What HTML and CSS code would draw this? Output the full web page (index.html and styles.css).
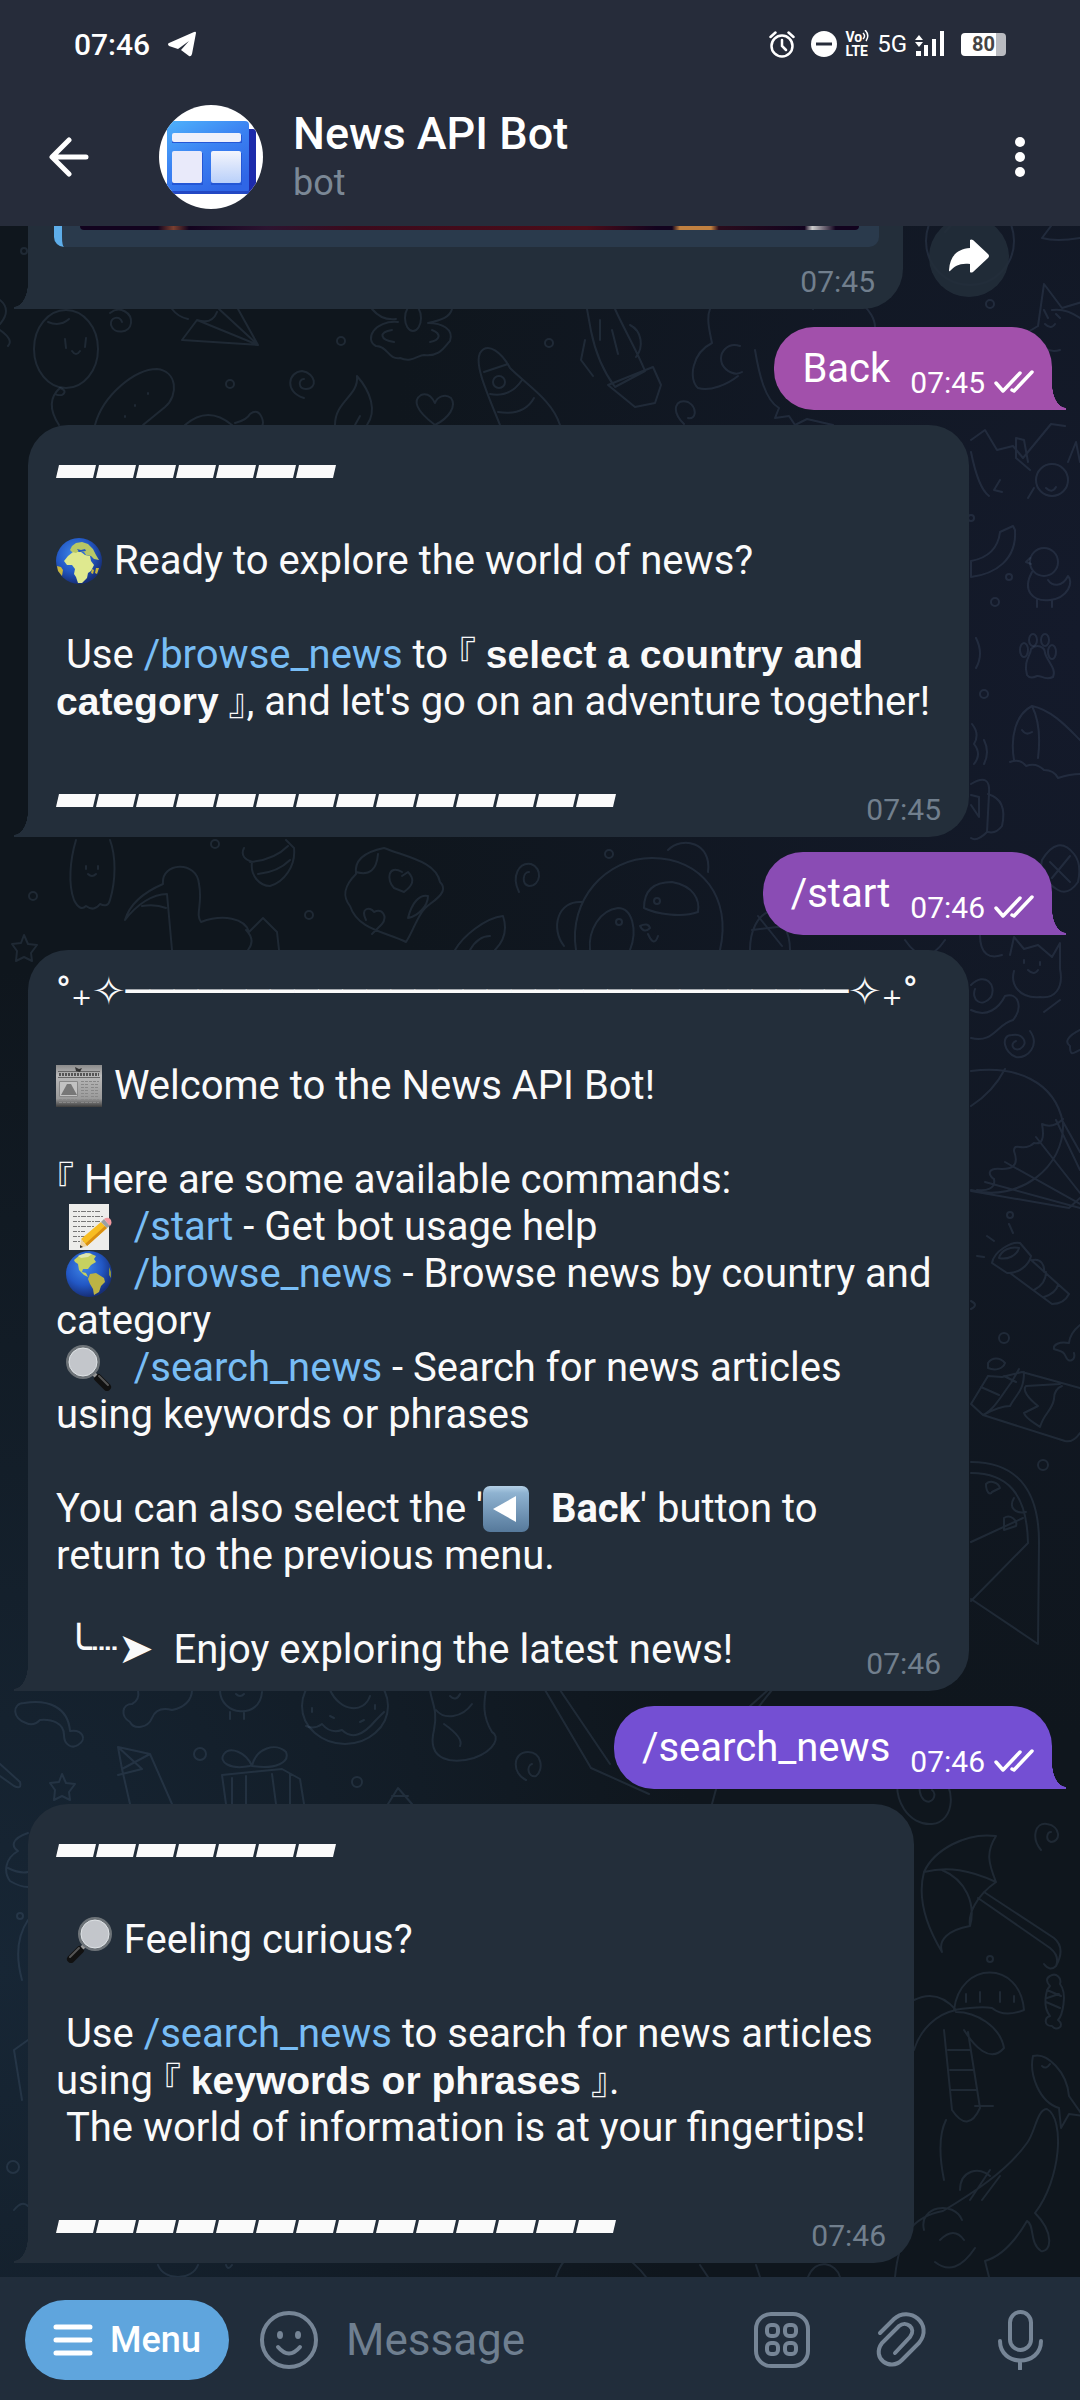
FILE: index.html
```html
<!DOCTYPE html>
<html lang="en">
<head>
<meta charset="utf-8">
<meta name="viewport" content="width=device-width, initial-scale=1">
<title>News API Bot</title>
<link rel="stylesheet" href="styles.css">
</head>
<body>
<svg class="sprite" aria-hidden="true">
  <defs>
    <radialGradient id="sea" cx="40%" cy="35%" r="65%"><stop offset="0" stop-color="#3f86e8"/><stop offset=".6" stop-color="#2257c4"/><stop offset="1" stop-color="#172f78"/></radialGradient>
    <linearGradient id="paper" x2="0" y2="1"><stop offset="0" stop-color="#8b8b8b"/><stop offset=".25" stop-color="#b9b9b9"/><stop offset=".8" stop-color="#9a9a9a"/><stop offset="1" stop-color="#3c3c3c"/></linearGradient>
    <linearGradient id="key" x2="0" y2="1"><stop offset="0" stop-color="#b4d0e6"/><stop offset=".15" stop-color="#8fb3d1"/><stop offset="1" stop-color="#56799b"/></linearGradient>
    <linearGradient id="card" x2=".6" y2="1"><stop offset="0" stop-color="#4fb2fb"/><stop offset=".5" stop-color="#3b82f2"/><stop offset="1" stop-color="#2f66e6"/></linearGradient>
    <linearGradient id="pane" x2="0" y2="1"><stop offset="0" stop-color="#f4f5fc"/><stop offset="1" stop-color="#b9d0fa"/></linearGradient>
    <pattern id="slab" width="40" height="13" patternUnits="userSpaceOnUse"><path fill="#fafafa" d="M3 0h37l-3 13H0z"/></pattern>
  </defs>
  <symbol id="globe-africa" viewBox="0 0 46 46">
    <circle cx="23" cy="23" r="23" fill="url(#sea)"/>
    <path fill="#dfe98f" d="M12 18l5-4 8 0 4 3 5 1 1 5 3 4-3 6-3 2-1 5-5 5-4 0-2-6-2-3 1-5-3-4-5 0-3-4z"/>
    <path fill="#b8c765" d="M14 12l2-4 4-3 6-1 6 2 5 5 3 6 3 5-5-1-3-3-5-1-2-3-5-1-3 2-4-1z"/>
    <path fill="#c9b53c" d="M1 28l4 1 2 3-1 6-4-5zM40 30l3 0-2 6-2-1zM36 31l2 1-1 4-2-1z"/>
    <path fill="#2457bf" d="M21 11l4 1 4-1 1 2-7 1z"/>
  </symbol>
  <symbol id="globe-americas" viewBox="0 0 46 46">
    <circle cx="23" cy="23" r="23" fill="url(#sea)"/>
    <path fill="#c7d160" d="M8 9l6-5 9-2 7 3-2 3 2 3-5 3-3 4-5 0-1 3 4 1 2 4-4-2-5-5-1-6-3-2z"/>
    <path fill="#bcb344" d="M24 23l6-1 8 5 1 4-4 4-2 6-5 3-1-6-3-5-2-5z"/>
    <path fill="#8c9440" d="M43 16l2 5 0 6-2-3z"/>
    <path fill="#dfe6b0" d="M12 5l8-3 6 1-4 3-7 1z"/>
  </symbol>
  <symbol id="newspaper" viewBox="0 0 46 46">
    <path fill="url(#paper)" d="M0 2h46v42H0z"/>
    <path stroke="#666" d="M2 8.500h42M2 14.500h42"/><path stroke="#555" stroke-width="3" stroke-dasharray="2 1" d="M3 11.500h40"/>
    <path fill="#333" d="M19 4l4 2 3-1-2 4-4-1z"/>
    <path fill="#c2c2c2" stroke="#888" d="M3.500 18.500h18v15h-18z"/><path fill="#777" d="M5 32l6-11 4 0 6 11z"/>
    <path stroke="#888" stroke-dasharray="3 1" d="M25 18.500h18M25 21.500h8M35 21.500h8M25 24.500h8M35 24.500h8M25 27.500h8M35 27.500h8M25 30.500h8M35 30.500h8M25 33.500h8M35 33.500h8M3 36.500h18M25 36.500h18M3 39.500h18M25 39.500h18"/>
  </symbol>
  <symbol id="memo" viewBox="0 0 46 46">
    <path fill="#ededeb" d="M3 0h40v46H3z"/>
    <path fill="none" stroke="#777" stroke-dasharray="4 1 2 1 5 1" d="M7 7.500h27M7 12.500h30M7 17.500h28M7 22.500h22M7 27.500h12M7 32.500h15M7 37.500h12"/>
    <path fill="#f7bd23" d="M35 18l6 6-20 18-6-7z"/><path fill="#d98f12" d="M39 22l2 2-20 18-2-2z"/>
    <path fill="#edd3a3" d="M15 35l6 7-7 2z"/><path fill="#333" d="M14 41l3 2-3 1z"/>
    <path fill="#9ba0a4" d="M35 18l3-3 6 7-3 2z"/><path fill="#f19aa0" d="M38 15c5-4 10 2 6 7z"/>
  </symbol>
  <symbol id="magnifier" viewBox="0 0 46 46">
    <path stroke="#111" stroke-width="8" stroke-linecap="round" d="M32 33l9 9"/>
    <path stroke="#555" stroke-width="2" stroke-linecap="round" d="M33 31l9 9"/>
    <path stroke="#999" stroke-width="4" d="M26 27l4 4"/>
    <circle cx="17" cy="17" r="15.500" fill="#c3c6cb" stroke="#6d7378" stroke-width="3"/>
    <circle cx="17" cy="17" r="14" fill="none" stroke="#dfe3e6"/>
  </symbol>
  <symbol id="reverse-key" viewBox="0 0 46 46">
    <rect width="46" height="46" rx="7" fill="url(#key)"/><path fill="#fff" d="M10 23l23-13v26z"/>
  </symbol>
  <symbol id="ticks" viewBox="0 0 42 24">
    <path fill="none" stroke="#fff" stroke-width="3.500" stroke-linecap="round" stroke-linejoin="round" d="M2 13l7 8L26 3M18 20l2 1L38 2"/>
  </symbol>
</svg>

<header class="top">
  <div class="status">
    <span class="clock">07:46</span>
    <svg class="plane" width="28" height="26" viewBox="0 0 28 26" aria-hidden="true"><path fill="#fff" d="M1 12L26 1q2-1 2 1l-4 21q-1 3-3 2l-8-6 8-9-11 8-9-3q-2-2 0-3z"/></svg>
    <div class="indicators">
      <svg width="26" height="27" viewBox="0 0 26 27" fill="none" stroke="#fff" stroke-width="2.500" stroke-linecap="round" aria-label="Alarm" role="img"><circle cx="13" cy="15" r="10.500"/><path d="M13 9v6l4 4M1.500 6l5-4.500M24.500 6l-5-4.500"/></svg>
      <svg class="dnd" width="26" height="26" viewBox="0 0 26 26" aria-label="Do not disturb" role="img"><circle cx="13" cy="13" r="13" fill="#fff"/><path stroke="#262c3a" stroke-width="3" d="M5 13h16"/></svg>
      <span class="volte"><span>Vo<svg width="7" height="12" viewBox="0 0 7 12" fill="none" stroke="#fff" stroke-width="1.500" aria-hidden="true"><path d="M1 3q3 3 0 6M3 0q5 5 1 11"/></svg></span><span>LTE</span></span>
      <span class="network">5G</span>
      <svg width="30" height="26" viewBox="0 0 30 26" fill="#fff" aria-label="Signal" role="img"><path d="M1 20h5v5H1zM9 14h4v11H9zM17 8h4v17h-4zM25 0h4v25h-4zM0 9l4-5 4 5zM0 11h8l-4 5z"/></svg>
      <span class="battery">80</span>
    </div>
  </div>
  <div class="titlebar">
    <button class="icon-button" aria-label="Go back"><svg width="40" height="40" viewBox="0 0 40 40" fill="none" stroke="#fff" stroke-width="5" stroke-linecap="round" stroke-linejoin="round"><path d="M20 3L3 20l17 17M4 20h33"/></svg></button>
    <svg class="avatar" width="104" height="104" viewBox="0 0 104 104" role="img" aria-label="News API Bot">
      <clipPath id="disc"><circle cx="52" cy="52" r="52"/></clipPath>
      <g clip-path="url(#disc)">
        <path fill="#fff" d="M0 0h104v104H0z"/>
        <rect x="40" y="24" width="57" height="64" rx="3" fill="#1d2bab"/>
        <rect x="8" y="16" width="82" height="72" rx="4" fill="url(#card)"/>
        <path fill="#2348c4" d="M8 86h82v3H8z"/>
        <path fill="#2457d6" d="M13 30h70v8H13zM13 48h31v32H13zM52 48h31v32H52z"/>
        <rect x="13" y="28" width="69" height="9" rx="2" fill="#eef0fb"/>
        <rect x="13" y="46" width="30" height="32" rx="2" fill="#e9eafa"/>
        <rect x="52" y="46" width="30" height="32" rx="2" fill="url(#pane)"/>
      </g>
    </svg>
    <div class="peer"><h1>News API Bot</h1><p>bot</p></div>
    <button class="icon-button" aria-label="More options"><svg width="12" height="42" viewBox="0 0 12 42" fill="#fff"><circle cx="6" cy="6" r="5"/><circle cx="6" cy="21" r="5"/><circle cx="6" cy="36" r="5"/></svg></button>
  </div>
</header>

<main class="chat">
  <svg class="doodles" width="1080" height="2051" viewBox="0 226 1080 2051" aria-hidden="true">
    <!-- strip under the first message -->
    <ellipse cx="66" cy="349" rx="32" ry="39"/><path d="M65 339l1 9M86 338l-1 9M72 351q4 6 8 0M48 322q12 5 21-3M60 388q-10 8 2 7q6-4-2-7q-16 14-1 37"/>
    <path d="M110 313c10-8 22 0 21 10c-1 10-17 12-20 2c-1-8 9-10 11-3"/>
    <path d="M197 320L182 340L258 345L238 309M197 320L258 345L219 309M197 320q15 5 20-8M172 309q6 8 16 10"/>
    <path d="M95 425c8-30 40-56 62-56c20 2 22 26 8 38l-22 18M148 393v1M135 405v1M125 416v1"/>
    <circle cx="341" cy="341" r="4"/><circle cx="230" cy="384" r="4"/><circle cx="24" cy="251" r="3"/><circle cx="549" cy="343" r="4"/><circle cx="990" cy="304" r="4"/>
    <path d="M304 398c-20-6-16-26-2-27c14 2 16 18 4 18c-8 0-8-10-2-10"/>
    <path d="M357 376c2 20-22 25-22 49M357 376c14 16 20 35 10 49M360 416l-5 9"/>
    <path d="M185 425q23-20 47 0M235 423q12-3 15-9q8-6 12 4q2 5 0 8"/>
    <path d="M398 322c-24-2-34 18-22 24c12 0 12 14 24 12c12 5 18-3 24-3c16 2 20-8 26-14c4-12-8-18-22-18c14-3 22-6 24-14M372 309q10 12 24 10"/><ellipse cx="413" cy="318" rx="8" ry="13"/><path d="M392 330c-14 2-12 10 2 12M432 330c10 4 8 10-2 12"/>
    <path d="M500 425c-12-30-26-60-20-72c8-12 22 0 30 15c18 18 42 32 50 57M484 372l24-8M490 394q20 4 32-14M498 412q26 4 36-14"/><circle cx="499" cy="382" r="6"/>
    <path d="M587 309l4 22c4 20 12 40 24 56l30-16c-8-20-22-44-30-62M608 385l45-18l8 18l-6 18l-20 4zM585 340l-4 20l12 16M600 320v20M612 330l6 24M630 325c12 6 14 22 6 32"/>
    <path d="M435 425c-20-15-22-25-14-30c8-3 12 4 14 8c2-6 10-10 16-5c6 8-2 20-16 27"/>
    <path d="M710 309c-4 10 0 24 2 34c-20 10-24 36-14 45c12 4 30-4 40-12M740 346c-12-4-22 6-18 18c4 8 14 12 20 8M755 350c4 24 10 50 24 58l-4 10l14-2l6 9l12-6l26 6M813 309c6-10 30-20 44-8c14 8 18 20 18 26"/>
    <path d="M1018 338l20-12l6-42l18 24l20-6M1036 340q10 14 24 10M1044 310l4 8M1056 314l4 4M1045 324q6 6 10 0M1052 310q14-2 28 8"/>
    <circle cx="970" cy="241" r="44"/><path d="M945 232q10-10 8-14M1042 238l12-16q10-8 26-2M1042 238q14 4 38 0"/>
    <path d="M684 424c-14-14-8-26 4-22c10 6 8 18 0 16M0 300q12 10 0 24M0 330q14 10 8 16"/>
    <!-- right column, upper -->
    <path d="M971 440l14-10l12 20l16-4l10 12l28-34l14 2M971 452c4 20 10 38 18 44M1000 480l-6 10l8 2M1030 470l-14-12v-20l8 2l4 22"/><circle cx="1052" cy="480" r="16"/><path d="M1034 488l-6 10M1046 488q6 6 10-1M1068 462l8-20l4 20"/>
    <path d="M1000 532l13-6l2 4c2 30-20 44-44 47v-16c16-3 27-12 29-29"/><circle cx="1009" cy="577" r="3"/><circle cx="971" cy="518" r="3"/><circle cx="995" cy="602" r="4"/><circle cx="984" cy="694" r="4"/>
    <circle cx="1044" cy="562" r="14"/><path d="M1032 572c-10 18 0 30 18 28c18-2 24-18 18-24c-6 12-16 10-20 4M1030 558l-4 4l5 2M1037 600v7M1052 600v7"/>
    <path d="M1027 675c-4-14 4-20 4-26c6-6 14-2 14 4c2 8 12 16 8 24c-8 4-12-2-16-1c-4 2-8 2-10-1"/><ellipse cx="1024" cy="650" rx="4" ry="7"/><ellipse cx="1033" cy="640" rx="4" ry="6"/><ellipse cx="1045" cy="640" rx="4" ry="6"/><ellipse cx="1052" cy="652" rx="4" ry="7"/>
    <path d="M1014 760c-4-24 2-46 18-54c20 4 36 22 48 34M1010 762q10-4 16 4q10-4 18 4q10 0 14 8q12-4 22-4M1032 706q10 20 6 52M1022 730q4 6 10 2M976 638q8 16 0 30M972 724q8 10 2 20q8 10 0 20M984 740q6 12 0 24"/>
    <path d="M971 784q20-12 18 10l-2 38q-10 10-16 6M988 794q20 6 14 32q-6 8-14 6M971 795l8 2v20l-8-12"/>
    <!-- strip between the messages -->
    <path d="M74 900c-6-16-4-40 2-60M74 900q6 12 12 6q8 6 14-2q8 4 10-4c6-20 6-44 0-60M86 866v3M98 866v3M88 874q4 4 8 0"/>
    <path d="M244 848c-4 8 2 12 8 14c-2 14 8 24 18 24c14-4 26-20 24-38l-8-8M250 862q24-2 38-16M258 874q20-2 32-14"/>
    <path d="M172 950l-5-56c-14 0-30 10-42 26c6-20 24-30 38-36c-2-22 34-24 36 0c4 20-4 30 2 38c22-8 44-4 48 10l14-14l14 14l2 18M142 906q14-2 24 2M246 930q10 10 2 20"/>
    <path d="M384 848c-20 4-30 12-28 26c-12 12-14 22-6 32c8 24 36 26 56 36c8-12 12-30 24-38c14-10 16-16 10-22c-4-20-30-24-56-34zM402 872c-14-8-16 8-8 16l10 4c8-6 12-12 4-20l-6 4M366 920c-6-12 4-14 8-8c8-4 14 4 8 12l-10 10M408 918c4-16 12-24 20-22c0 10-10 20-20 22M356 872q20 6 22-18"/>
    <path d="M519 892c-8-16 0-30 12-28c12 4 10 22-2 22c-8-2-6-14 0-14"/>
    <path d="M455 950c8-14 30-32 48-34c4 12 2 24-8 34M470 950q8-14 20-14"/>
    <path d="M576 950c-8-50 30-92 76-92c50 0 80 40 68 92M668 850c14-14 44-8 40 22M582 902c-24-2-32 26-18 44M590 950c-2-20 10-40 28-42c14 0 20 22 12 42M644 908c0-20 12-26 28-26c22 4 28 18 26 30c-16 6-42 2-54-4z"/><circle cx="619" cy="922" r="3"/><circle cx="657" cy="901" r="3"/><path d="M640 926q8-4 10 2q-6 6-10-2M648 934q6 14 10 2"/>
    <path d="M750 950c0-20 8-34 18-38c14 6 22 20 22 38M752 930l34-4M758 916l24 30"/><circle cx="609" cy="854" r="4"/><circle cx="309" cy="915" r="4"/><circle cx="33" cy="896" r="4"/><circle cx="215" cy="844" r="4"/>
    <path d="M24 935l4 9l9 1l-6 8l1 8l-8-4l-8 4l1-10l-5-7l9-1z"/>
    <path d="M1042 860q16-26 32-6q8 10 4 28q-10 14-20 8q-20-12-16-30M1050 862l20 20M1052 878l18-22"/>
    <!-- right column, middle -->
    <path d="M905 940q20 30 40 0M980 935c0 20 10 24 22 20M1010 955l4-18l10 12l14-4l14 12l8-14v26c4 20-6 30-20 28c-20 2-30-12-26-26M1024 960v3M1040 962v3M1028 970q6 6 10 0M971 985c14-14 26 0 20 12c-10 12-20 2-16-8M971 1010c16 8 28-2 34-14c14-4 18 12 8 24c-16 4-20 24-42 18M1060 1000l-16 12"/>
    <path d="M1030 1031c10 14-2 28-14 26c-12-4-16-22-4-22c10-2 18 8 8 14c-8 2-10-6-4-8"/>
    <path d="M1080 1030c-12 6-16 12-10 16c0 12 4 6 10 4"/>
    <path d="M971 1071c44-6 84 10 92 52c2 44-44 80-92 67M971 1106q22-14 34-37M1063 1119q-10 10-21 5q4 22-8 19c-10 10-20-2-20 8c6 16-4 18-12 18c-18-2-12 8-8 10c2 10-8 12-17 11M971 1191l98 17l11-10M985 1182l95 26M1005 1162l75 42M1036 1137l44 56M1056 1120l24 50M1062 1120l18 32"/>
    <circle cx="1010" cy="1215" r="3"/><circle cx="1004" cy="1338" r="5"/><circle cx="1043" cy="1465" r="5"/>
    <path d="M1009 1224l4 9M987 1236l7 5M977 1256l7 1M992 1263c2-12 20-22 28-20l11 13c-2 10-14 18-24 17zM999 1258c2-8 12-12 20-10c-2 8-12 12-20 10M1010 1273l42 31c8 0 14-4 17-10l-39-35M1034 1290q12-6 12-18M1044 1297q12-4 14-12M1033 1260c8-2 12 6 11 12"/>
    <path d="M971 1301q8 4 0 8M1080 1325q-10 8-11 18c-10-2-16 2-15 6c6 2 10 2 12 8c2 6 10 4 8-4"/>
    <path d="M988 1363c4-6 12-6 17 0c-2 6-10 8-17 5zM988 1376l-17 28l12 11c12-6 20-22 28-32l8-14M988 1376l14 1l20-5l58 16M983 1415l82 26q8 2 15-8M981 1387l18 8M1004 1376l12 6M1024 1372c0 20-8 22-14 34q-10 0-27 9M1060 1384l-34 2c-4 4 2 12 12 20l-14 7c2 6 8 8 16 14c4-14 12-16 14-28q0-10 8-13"/>
    <path d="M971 1462c42 0 68 24 68 80l-1 102q-30-20-67-45M971 1473c36 0 56 20 57 70l-57 58M971 1542l52-24M986 1484c4-4 12-2 14 4l-8 4c-2 4-6 0-6-8M1014 1498c-6 10 2 16 12 14M1004 1518c6-4 14 2 12 8l-12 4z"/>
    <!-- lower strip -->
    <path d="M26 1723c-14-4-14-20-2-20c24-4 44 4 46 28c12-2 18 8 8 14c-6 4-14 0-14-10c0-12-12-16-24-15c-4 4-8 6-14 3"/>
    <path d="M130 1722c-10-6-8-18 2-18q8-4 6-14M130 1722c4 8 18 6 22-4c4-10 12-10 20-8c12-2 20-10 20-20"/>
    <path d="M220 1690c0 26 40 30 42 2M230 1712v7M244 1712v7M236 1694q4 4 8 0"/>
    <ellipse cx="345" cy="1706" rx="43" ry="38"/><path d="M330 1690c10 22 34 24 40 6M306 1726q8 4 16-2q8 10 20 6q14 14 34-10l8-8M312 1708v4M330 1716l4 2M360 1722l4-2M375 1705v4"/>
    <path d="M430 1690c2 14 8 20 4 40c-8 32 20 34 40 28c22-8 26-22 18-26c-10-16-8-30-6-42M436 1710c8 10 26 8 36-6M444 1724q20 14 16 22M450 1696q6 6 10-2"/>
    <path d="M545 1690l46 78l58 26M560 1690l50 74M740 1715l28-25M712 1804c12-50 40-90 60-114"/>
    <path d="M526 1780c-14-6-14-28 2-28c14 0 16 18 8 24c-8 2-10-10-4-12M1041 1850c-10-12-6-28 6-26c14 2 14 18 4 18c-6-2-4-10 0-10"/>
    <path d="M172 1804l-22-50l-32-7l4 22l8 35M118 1747l24 22l-24 6M122 1769l28-15"/>
    <path d="M222 1775l60-6l18 10l4 25M222 1775l4 29M232 1778v26M246 1776v28M272 1774l4 30M290 1774v30M250 1766c-20 4-32-4-26-12c6-8 22-2 28 12c4-18 24-24 34-14c4 10-10 18-34 14"/>
    <circle cx="200" cy="1754" r="6"/><circle cx="357" cy="1782" r="5"/><circle cx="20" cy="1916" r="3"/>
    <path d="M62 1774l4 9l9 1l-6 8l1 8l-8-4l-8 4l1-10l-5-7l9-1zM0 1764l20 18q2 8-6 4l-14-10M388 1804l10-16l14 16M392 1796h16"/>
    <path d="M28 1833c-18 6-16 14-10 18c-14 8-14 22-8 30q10 6 18 6M8 1868q12 6 20 4M28 1920q-16 24-6 60M14 2050l14-10M14 2050l8 50"/>
    <!-- right column, lower -->
    <path d="M900 1770c-10 30 10 56 32 54c24-2 24-40 6-50c-16-4-24 16-14 26c8 6 14-6 8-10"/>
    <path d="M996 1836c-30-4-62 14-72 36c24-6 46-2 72 10c-8-20-10-30 0-46zM924 1872c-8 30 6 60 18 80c-4-12 6-22 28-26c-2-12 6-30 26-44M942 1870c24 10 34 34 28 56M978 1898l72 50q10 8 6 18q-6 6-12-2M984 1892l70 46q12 10 2 28"/>
    <circle cx="990" cy="1959" r="3"/>
    <path d="M954 2010c6-50 66-50 70 0q-20 8-32-2q-12-2-38 2zM966 2002v-8M980 2002v-10M1000 2002v-10M1014 2002v-6M914 2000c16-8 30-4 42 10c-20 4-36 20-42 40M956 2012c20 0 44 14 48 36c-14 16-30-2-40-18M944 2030l8 80q16 24 28-2l-12-76M948 2050h22M950 2070h24M950 2090h26M975 2106h18"/>
    <path d="M1050 1976c6-4 12 2 10 8c8 10 2 32-2 36c8 6-2 12-6 6c-8 0-8-8-2-10c-8-10-4-26 0-30c-4-4-4-8 0-10zM1047 1990l14 6M1046 2002l14 6M1047 1998l12-4"/>
    <path d="M1033 2056c14-4 34 16 36 40l14 20l-14-2l-8 14l-2-20c-20-6-30-34-26-52M1042 2066q4 4 8-2"/>
    <path d="M895 2277c4-40 16-60 48-66c30-18 64-40 84-68c8-10 10-34 20-34c18 10 14 70-12 104c20 20 16 40 6 38c-12-8-6-26-14-30c-14 24-28 36-42 40l4 16M960 2190c0-20 20-24 30-14M924 2230c-6-24 30-30 38-10M940 2240q14-14 24 0M935 2262q20 16 40-14M990 2170l-20 30M1000 2176l-18 24M946 2120q-10 20-2 60"/>
    <path d="M556 2277c12-40 60-40 90 0M700 2265l8 12M756 2265l4 12M808 2277c8-20 28-14 32 0M158 2265c6 16 34 16 40 0M226 2265q2 6 6 0"/>
    <circle cx="13" cy="2167" r="6"/><path d="M14 2210q8-10 14-4"/>
  </svg>

  <div class="thread">
    <div class="row">
      <article class="bubble in continued">
        <div class="quote"><div class="preview"></div></div>
        <time>07:45</time>
      </article>
      <button class="share" aria-label="Share"><svg width="40" height="34" viewBox="0 0 40 34"><path fill="#fff" d="M21 1q1-1 3 0l15 14q2 2 0 4L24 33q-2 1-3 0v-8C10 24 6 27 1 32q-1 1-1-1C1 17 8 10 21 9z"/></svg></button>
    </div>

    <article class="bubble out pink"><p>Back</p><time>07:45</time><svg class="read" width="42" height="24" role="img" aria-label="Read"><use href="#ticks"/></svg></article>

    <article class="bubble in wide">
      <div class="text">
        <p><svg class="bars" width="280" height="13" role="img" aria-label="Divider"><rect width="280" height="13" fill="url(#slab)"/></svg></p>
        <p><svg class="emoji" role="img" aria-label="Globe"><use href="#globe-africa"/></svg> Ready to explore the world of news?</p>
        <p> Use <a href="#browse">/browse_news</a> to <span class="bracket">『</span> <strong>select a country and</strong><br><strong>category</strong> <span class="bracket">』</span>, and let's go on an adventure together!</p>
        <p><svg class="bars" width="560" height="13" role="img" aria-label="Divider"><rect width="560" height="13" fill="url(#slab)"/></svg></p>
      </div>
      <time>07:45</time>
    </article>

    <article class="bubble out violet"><p>/start</p><time>07:46</time><svg class="read" width="42" height="24" role="img" aria-label="Read"><use href="#ticks"/></svg></article>

    <article class="bubble in wide">
      <div class="text">
        <p>°<span class="symbols">₊✧──────────────────────────────✧₊</span>°</p>
        <p><svg class="emoji" role="img" aria-label="Newspaper"><use href="#newspaper"/></svg> Welcome to the News API Bot!</p>
        <p><span class="bracket">『</span> Here are some available commands:<br> <svg class="emoji" role="img" aria-label="Memo"><use href="#memo"/></svg>  <a href="#start">/start</a> - Get bot usage help<br> <svg class="emoji" role="img" aria-label="Globe"><use href="#globe-americas"/></svg>  <a href="#browse">/browse_news</a> - Browse news by country and<br>category<br> <svg class="emoji" role="img" aria-label="Magnifying glass"><use href="#magnifier"/></svg>  <a href="#search">/search_news</a> - Search for news articles<br>using keywords or phrases</p>
        <p>You can also select the '<svg class="emoji" role="img" aria-label="Reverse button"><use href="#reverse-key"/></svg>  <b>Back</b>' button to<br>return to the previous menu.</p>
        <p> <span class="symbols arrow">╰┈➤</span>  Enjoy exploring the latest news!</p>
      </div>
      <time>07:46</time>
    </article>

    <article class="bubble out indigo"><p>/search_news</p><time>07:46</time><svg class="read" width="42" height="24" role="img" aria-label="Read"><use href="#ticks"/></svg></article>

    <article class="bubble in medium">
      <div class="text">
        <p><svg class="bars" width="280" height="13" role="img" aria-label="Divider"><rect width="280" height="13" fill="url(#slab)"/></svg></p>
        <p> <svg class="emoji mirrored" role="img" aria-label="Magnifying glass"><use href="#magnifier"/></svg> Feeling curious?</p>
        <p> Use <a href="#search">/search_news</a> to search for news articles<br>using <span class="bracket">『</span> <strong>keywords or phrases</strong> <span class="bracket">』</span>.<br> The world of information is at your fingertips!</p>
        <p><svg class="bars" width="560" height="13" role="img" aria-label="Divider"><rect width="560" height="13" fill="url(#slab)"/></svg></p>
      </div>
      <time>07:46</time>
    </article>
  </div>
</main>

<footer class="composer">
  <button class="menu"><svg width="40" height="32" viewBox="0 0 40 32" stroke="#fff" stroke-width="5" stroke-linecap="round" aria-hidden="true"><path d="M3 3h34M3 16h34M3 29h34"/></svg>Menu</button>
  <button class="icon-button" aria-label="Emoji"><svg width="60" height="60" viewBox="0 0 60 60" fill="none" stroke="#768596" stroke-width="4" stroke-linecap="round"><circle cx="30" cy="30" r="27"/><path d="M19 37q11 13 22 0"/><g fill="#768596" stroke="none"><ellipse cx="21" cy="25" rx="3" ry="4"/><ellipse cx="39" cy="25" rx="3" ry="4"/></g></svg></button>
  <input class="message" type="text" placeholder="Message" aria-label="Message">
  <div class="tools">
    <button class="icon-button" aria-label="Keyboard"><svg width="60" height="60" viewBox="0 0 60 60" fill="none" stroke="#768596" stroke-width="4"><rect x="4" y="4" width="52" height="52" rx="15"/><g><rect x="15" y="15" width="11" height="11" rx="4"/><rect x="33" y="15" width="11" height="11" rx="4"/><rect x="15" y="33" width="11" height="11" rx="4"/><rect x="33" y="33" width="11" height="11" rx="4"/></g></svg></button>
    <button class="icon-button" aria-label="Attach"><svg width="60" height="60" viewBox="0 0 60 60" fill="none" stroke="#768596" stroke-width="4" stroke-linecap="round"><path d="M9 23L23 9c15-14 40 5 25 24L31 50C19 62 0 48 11 33L28 16c7-6 18 2 11 11L24 43"/></svg></button>
    <button class="icon-button" aria-label="Record voice message"><svg width="60" height="60" viewBox="0 0 60 60" fill="none" stroke="#768596" stroke-width="4" stroke-linecap="round"><rect x="20" y="2" width="21" height="38" rx="10.500"/><path d="M10 31c0 26 41 26 41 0M30 51v8"/></svg></button>
  </div>
</footer>
</body>
</html>
```
FILE: styles.css
```css
* { box-sizing: border-box; }

body {
  margin: 0;
  min-height: 100vh;
  display: flex;
  flex-direction: column;
  background: #111922;
  color: #fafafa;
  font-family: Roboto, "Noto Sans", "DejaVu Sans", sans-serif;
  font-size: 40px;
  line-height: 47px;
}

h1, p { margin: 0; }
a { color: #78bdf5; text-decoration: none; }
button { margin: 0; padding: 0; border: 0; background: none; color: inherit; font: inherit; cursor: pointer; }
svg { display: block; flex: none; }
.sprite { position: absolute; width: 0; height: 0; }
.icon-button { flex: none; }

/* Header */
.top { background: #262c3a; position: relative; }
.status { display: flex; align-items: center; height: 88px; padding: 0 74px; font-size: 30px; font-weight: 500; color: #fff; }
.plane { margin-left: 18px; }
.indicators { display: flex; align-items: center; gap: 8px; margin-left: auto; }
.dnd { margin-left: 8px; }
.volte { display: flex; flex-direction: column; font-size: 14px; line-height: 14px; font-weight: 700; }
.volte span { display: flex; }
.network { font-size: 24px; line-height: 26px; font-weight: 400; }
.battery {
  width: 45px; height: 23px; margin-left: 8px; border-radius: 4px;
  background: linear-gradient(90deg, #fff 35px, #b9bbc0 35px);
  color: #444; font-size: 20px; line-height: 23px; font-weight: 700; text-align: center;
}
.titlebar { display: flex; align-items: center; height: 138px; padding: 0 54px 0 49px; }
.avatar { margin: 0 30px 0 70px; }
.peer { flex: 1; min-width: 0; }
.peer h1 { font-size: 45px; line-height: 52px; font-weight: 500; color: #fff; }
.peer p { font-size: 36px; line-height: 46px; color: #7b8896; }

/* Conversation */
.chat {
  flex: 1;
  position: relative;
  overflow: hidden;
  background:
    radial-gradient(700px 1000px at 0 85%, #172635, transparent),
    radial-gradient(700px 1100px at 100% 20%, #141a2b, transparent),
    #0f161d;
}
.doodles { position: absolute; top: 0; right: 0; fill: none; stroke: #8caad2; stroke-opacity: .13; stroke-width: 2; stroke-linecap: round; stroke-linejoin: round; }
.thread { position: relative; display: flex; flex-direction: column; align-items: flex-start; gap: 15px; padding: 0 28px 14px; }
.row { display: flex; align-items: flex-end; gap: 26px; width: 100%; margin-bottom: 3px; }

.bubble { --fill: #232e3a; position: relative; padding: 18px 28px; border-radius: 40px; background: var(--fill); }
.bubble p { min-height: 47px; white-space: pre-wrap; }
.bubble::after { content: ""; position: absolute; bottom: 0; width: 14px; height: 26px; }
.bubble time { align-self: end; margin-bottom: -6px; font-size: 30px; line-height: 30px; }
.text { display: flex; flex-direction: column; gap: 47px; }

.in { display: grid; width: 100%; border-bottom-left-radius: 0; }
.in > .text, .in > time { grid-area: 1 / 1; }
.in time { justify-self: end; color: #717f8d; }
.in::after { right: 100%; background: radial-gradient(14px 24px at 0 0, transparent 98%, var(--fill)); }
.wide { max-width: 941px; }
.medium { max-width: 886px; }

.out { --fill: #a250ab; display: flex; align-self: flex-end; padding-right: 16px; border-bottom-right-radius: 0; color: #fff; }
.out::after { left: 100%; background: radial-gradient(14px 24px at 100% 0, transparent 98%, var(--fill)); }
.out time { margin-left: 20px; }
.violet { --fill: #8a4cb4; }
.indigo { --fill: #744fd3; }
.read { align-self: flex-end; margin: 0 0 -2px 9px; }

.continued { max-width: 875px; height: 83px; padding-top: 0; border-top-left-radius: 0; border-top-right-radius: 0; }
.continued .quote { grid-area: 1 / 1; height: 21px; margin: 0 -4px 0 -2px; padding: 0 20px 0 18px; border-left: 8px solid #5eaeea; border-radius: 0 0 10px 10px; background: #2a3a4c; }
.preview { height: 4px; border-radius: 0 0 4px 4px; background: linear-gradient(90deg, #12031e 10%, #7a4030 12%, #12031e 14%, #2c1430 24%, #3c0a1c 35%, #4c0c18 65%, #12031e 74%, #12031e 76%, #c08040 77%, #c08040 81%, #2a0c1c 82%, #12031e 93%, #ccc 94%, #12031e 97%); }
.share { flex: none; display: grid; place-items: center; width: 80px; height: 80px; margin: -9px 0 12px; padding-bottom: 3px; border-radius: 50%; background: #222d3ae6; }

.bars { display: inline-block; vertical-align: 2px; }
.symbols { font-family: "DejaVu Sans", sans-serif; line-height: 1px; }
.arrow { font-size: 43px; }
.bracket { font-family: "Noto Sans CJK JP", sans-serif; font-size: 36px; line-height: 1px; font-feature-settings: "halt"; }
.bubble strong { font-family: "Liberation Sans", sans-serif; font-size: 39px; font-weight: 700; line-height: 1px; }
.bubble b { font-weight: 700; }
.emoji { display: inline-block; width: 46px; height: 46px; margin-right: 2px; vertical-align: -10px; }
.mirrored { transform: scaleX(-1); }

/* Composer */
.composer { position: relative; display: flex; align-items: center; padding: 23px 30px 20px 25px; background: #212d3b; color: #fff; }
.menu { display: flex; align-items: center; justify-content: center; gap: 17px; flex: none; width: 204px; height: 80px; margin-right: 30px; border-radius: 40px; background: #5fa5dd; font-size: 36px; font-weight: 500; }
.message { flex: 1; min-width: 0; margin: 0 30px 0 27px; padding: 0; border: 0; outline: 0; background: none; color: #fff; font: inherit; font-size: 44px; line-height: 52px; }
.message::placeholder { color: #6f7f90; opacity: 1; }
.tools { display: flex; gap: 59px; }
```
